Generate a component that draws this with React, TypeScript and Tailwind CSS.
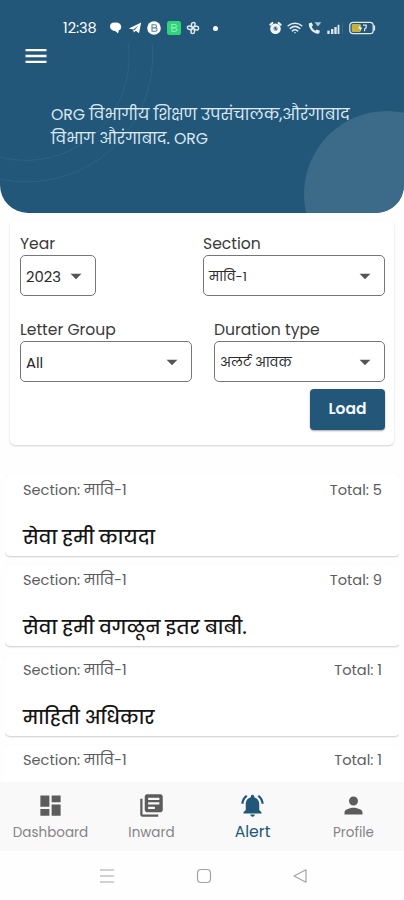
import React, { useState } from 'react';
import { MdArrowDropDown, MdDashboard, MdLibraryBooks, MdMenu, MdNotificationsActive, MdPerson } from 'react-icons/md';

interface AlertItem {
  id: number;
  section: string;
  total: number;
  title?: string;
}

interface SelectBoxProps {
  label: string;
  value: string;
  className: string;
  valueClass?: string;
}

const alerts: AlertItem[] = [
  { id: 1, section: 'मावि', total: 5, title: 'सेवा हमी कायदा' },
  { id: 2, section: 'मावि', total: 9, title: 'सेवा हमी वगळून इतर बाबी.' },
  { id: 3, section: 'मावि', total: 1, title: 'माहिती अधिकार' },
  { id: 4, section: 'मावि', total: 1 },
];

const tabs = [
  { name: 'Dashboard', Icon: MdDashboard },
  { name: 'Inward', Icon: MdLibraryBooks },
  { name: 'Alert', Icon: MdNotificationsActive },
  { name: 'Profile', Icon: MdPerson },
];

const StatusBar: React.FC = () => (
  <div className="relative flex h-[43px] items-center pt-[13px] pl-[63px] text-white">
    <span className="w-[36px] text-[14.5px] leading-none whitespace-nowrap">12:38</span>
    <svg className="ml-[10px] h-[14px] w-[14px]" viewBox="0 0 14 14" fill="currentColor">
      <path d="M1 5.200C1 3 3.400 1.200 6 1.700c2.800-.6 5.800.8 6.200 3.700.2 1.900-.8 3.200-2.300 3.900L9 12.600 6.600 10.200C3.600 10 1 8 1 5.200z" />
    </svg>
    <svg className="ml-[5px] h-[14px] w-[14px]" viewBox="0 0 14 14" fill="currentColor">
      <path d="M.8 7.400 13.200 1.600 11 12.200 7.800 9.800 5.800 11.600 5.200 8.600z" />
      <path d="M5.200 8.600 10.600 4.400 6.400 9.200z" fill="#22577a" />
    </svg>
    <svg className="ml-[5px] h-[14px] w-[14px]" viewBox="0 0 14 14">
      <circle cx="7" cy="7" r="6.800" fill="#fff" />
      <path d="M5 3.800h3a1.500 1.500 0 0 1 0 3H5zM5 6.900h3.400a1.600 1.600 0 0 1 0 3.300H5z" fill="none" stroke="#5c8199" strokeWidth="1.100" />
    </svg>
    <svg className="ml-[6px] h-[14px] w-[14px]" viewBox="0 0 14 14">
      <rect width="14" height="14" rx="2.500" fill="#2fd578" />
      <path d="M4.800 3.500h3a1.600 1.600 0 0 1 0 3.300h-3zM4.800 6.800h3.400a1.700 1.700 0 0 1 0 3.500H4.800z" fill="none" stroke="#a0efc2" strokeWidth=".9" />
    </svg>
    <svg className="ml-[5px] h-[14px] w-[14px]" viewBox="0 0 14 14" fill="none" stroke="#dfe9ee" strokeWidth="1.500">
      <path d="M7 7C4.500 4.500 5 1.400 7.500 1.400S9.500 4.500 7 7zM7 7c2.500-2.500 5.600-2 5.600.3S9.500 9.500 7 7zM7 7c2.500 2.500 1.800 5.600-.5 5.600S4.500 9.500 7 7zM7 7C4.500 9.300 1.400 8.800 1.400 6.600S4.500 4.700 7 7z" />
    </svg>
    <span className="ml-[13px] h-[5px] w-[5px] rounded-full bg-white" />
    <svg className="ml-[50px] h-[14px] w-[14px]" viewBox="0 0 14 14">
      <circle cx="7.500" cy="7.800" r="5.300" fill="#f3f7f9" />
      <path d="M2.400 3.800 4.400 1.900M12.600 3.800 10.600 1.900" stroke="#f3f7f9" strokeWidth="2" strokeLinecap="round" />
      <circle cx="7.500" cy="7.600" r="2.300" fill="#8aa7b8" />
      <path d="M7.300 6v2l1.500.9" fill="none" stroke="#22577a" strokeWidth="1" />
    </svg>
    <svg className="ml-[5px] h-[14px] w-[16px]" viewBox="0 0 17 14" fill="none" stroke="#e4edf2" strokeWidth="1.700" strokeLinecap="round">
      <path d="M1.300 4.600C5.400 1.100 11.600 1.100 15.700 4.600M3.500 7.400c3-2.500 7-2.500 10 0M5.700 10c1.700-1.400 3.900-1.400 5.600 0" />
      <path d="M7.300 11.600h2.400l-1.200 1.600z" fill="#e4edf2" stroke="none" />
    </svg>
    <svg className="ml-[5px] h-[14px] w-[14px]" viewBox="0 0 14 14" fill="#e4edf2">
      <path d="M1 2.200 3.700 1.400 5 4.600 3.700 5.800c.8 1.800 1.900 3 3.700 3.900l1.300-1.300 3.200 1.400-.7 2.700C6 13.700-.2 7.500 1 2.200z" />
      <path d="M6.500 1.200h6.800L10 5.400z" opacity=".75" />
    </svg>
    <svg className="ml-[5px] h-[14px] w-[16px]" viewBox="0 0 16 14" fill="#dbe6ec">
      <rect x=".3" y="9.600" width="2.400" height="3.400" />
      <rect x="4" y="8" width="2.400" height="5" />
      <rect x="7.300" y="6" width="2.400" height="7" />
      <rect x="10.600" y="3.800" width="1.800" height="9.200" />
      <rect x="15" y="1.400" width=".8" height="11.600" opacity=".15" />
    </svg>
    <svg className="ml-[6px] h-[14px] w-[27px]" viewBox="0 0 27 14">
      <rect x=".8" y="1.300" width="23.400" height="11.400" rx="3.200" fill="none" stroke="#dfe9ee" strokeWidth="1.300" />
      <rect x="2.700" y="3.100" width="8.800" height="7.800" rx="1" fill="#c2b13c" />
      <path d="M11.500 3.500 9.200 7.500h2.200l-.6 3.200 2.500-4.300h-2z" fill="#fff" />
      <path d="M14 4.200h3.200v2.600l-1.600 1.200v2.200" fill="none" stroke="#dfe9ee" strokeWidth="1.200" />
      <path d="M25.400 5v4" stroke="#dfe9ee" strokeWidth="1.400" strokeLinecap="round" />
    </svg>
  </div>
);

const SelectBox: React.FC<SelectBoxProps> = ({ label, value, className, valueClass = 'text-[14.8px]' }) => (
  <div className={className}>
    <div className="h-[22px] text-[15.6px] leading-[21px] whitespace-nowrap text-[#3a3a3a]">{label}</div>
    <button className="flex h-[41px] w-full items-center justify-between rounded-[5px] border border-[#767676] pr-[6px] pl-[5px] whitespace-nowrap text-[#2b2b2b]">
      <span className={`pt-[3px] ${valueClass}`}>{value}</span>
      <MdArrowDropDown className="h-[26px] w-[26px] text-[#555]" />
    </button>
  </div>
);

const App: React.FC = () => {
  const [activeTab, setActiveTab] = useState('Alert');

  return (
    <div className="flex h-[900px] w-[404px] flex-col overflow-hidden bg-[#fefefe] font-['Poppins','Inter','Noto_Sans_Devanagari','Noto_Sans',sans-serif]">
      <header className="relative h-[213px] shrink-0 overflow-hidden rounded-b-[28px] bg-[#22577a]">
        <svg className="absolute inset-0 h-full w-full" viewBox="0 0 404 213" fill="none">
          <circle cx="387" cy="194" r="83" fill="#3b6b89" />
          <g stroke="#2f6283" strokeWidth="1">
            <path d="M128 43A103 103 0 0 1 0 157" />
            <path d="M152 43A126 126 0 0 1 0 179" />
          </g>
        </svg>
        <StatusBar />
        <button className="relative -mt-px ml-[22px] block text-white">
          <MdMenu className="h-[28px] w-[28px]" />
        </button>
        <h1 className="relative mt-[33px] pl-[51px] text-[15.7px] leading-[24px] whitespace-nowrap text-[#dce9f2]">
          ORG विभागीय शिक्षण उपसंचालक,औरंगाबाद
          <br />
          विभाग औरंगाबाद. ORG
        </h1>
      </header>

      <section className="mx-[10px] mt-[8px] h-[224px] shrink-0 rounded-[5px] bg-white pr-[9px] pl-[10px] pt-[12px] shadow-[0_1px_2px_rgba(0,0,0,0.18)]">
        <div className="flex justify-between">
          <SelectBox label="Year" value="2023" className="w-[76px]" />
          <SelectBox label="Section" value="मावि-1" className="w-[182px]" valueClass="text-[13px]" />
        </div>
        <div className="mt-[23px] flex justify-between">
          <SelectBox label="Letter Group" value="All" className="w-[172px]" />
          <SelectBox label="Duration type" value="अलर्ट आवक" className="w-[171px]" valueClass="text-[13.2px]" />
        </div>
        <div className="mt-[7px] flex justify-end">
          <button className="h-[41px] w-[75px] rounded-[4px] bg-[#22577a] pb-px text-[15.5px] font-semibold text-[#f2f7fa] shadow-[0_1px_2px_rgba(0,0,0,0.35)]">Load</button>
        </div>
      </section>

      <main className="mx-[5px] mt-[30px] flex min-h-0 flex-1 flex-col gap-[9px] overflow-hidden">
        {alerts.map((item) => (
          <article key={item.id} className="h-[81px] w-[395px] shrink-0 rounded-[5px] bg-white px-[18px] shadow-[0_1px_2px_rgba(0,0,0,0.2)]">
            <div className="flex justify-between pt-[5px] text-[14.6px] leading-[20px] text-[#5c5c5c]">
              <span>Section: {item.section}-1</span>
              <span>Total: {item.total}</span>
            </div>
            {item.title && (
              <h2 className="mt-[24px] text-[19px] leading-[28px] font-medium whitespace-nowrap text-[#151515]">{item.title}</h2>
            )}
          </article>
        ))}
      </main>

      <nav className="grid h-[69px] shrink-0 grid-cols-4 bg-[#f9f9f9]">
        {tabs.map(({ name, Icon }) => (
          <button
            key={name}
            onClick={() => setActiveTab(name)}
            className={`flex flex-col items-center pt-[10px] ${activeTab === name ? 'text-[#22577a]' : 'text-[#5c5c5c]'}`}
          >
            <Icon className="h-[27px] w-[27px] shrink-0" />
            <span className={activeTab === name ? 'mt-px text-[15.7px] leading-[23px]' : 'mt-[3px] text-[13.5px] leading-[22px] text-[#858585]'}>{name}</span>
          </button>
        ))}
      </nav>

      {/* Android system keys */}
      <footer className="flex h-[49px] shrink-0 items-center gap-[82px] bg-[#fefefe] pl-[100px] text-[#a3a3a3]">
        <svg className="h-[16px] w-[14px]" viewBox="0 0 14 16" fill="none" stroke="currentColor" strokeWidth="1.200">
          <path d="M0 2h14M0 8h14M0 14h14" />
        </svg>
        <svg className="h-[16px] w-[16px]" viewBox="0 0 16 16" fill="none" stroke="currentColor" strokeWidth="1.200">
          <rect x="1.500" y="1.500" width="13" height="13" rx="3.500" />
        </svg>
        <svg className="-ml-px h-[16px] w-[14px]" viewBox="0 0 14 16" fill="none" stroke="currentColor" strokeWidth="1.200" strokeLinejoin="round">
          <path d="M13 1.800v12.400L1 8z" />
        </svg>
      </footer>
    </div>
  );
};

export default App;
